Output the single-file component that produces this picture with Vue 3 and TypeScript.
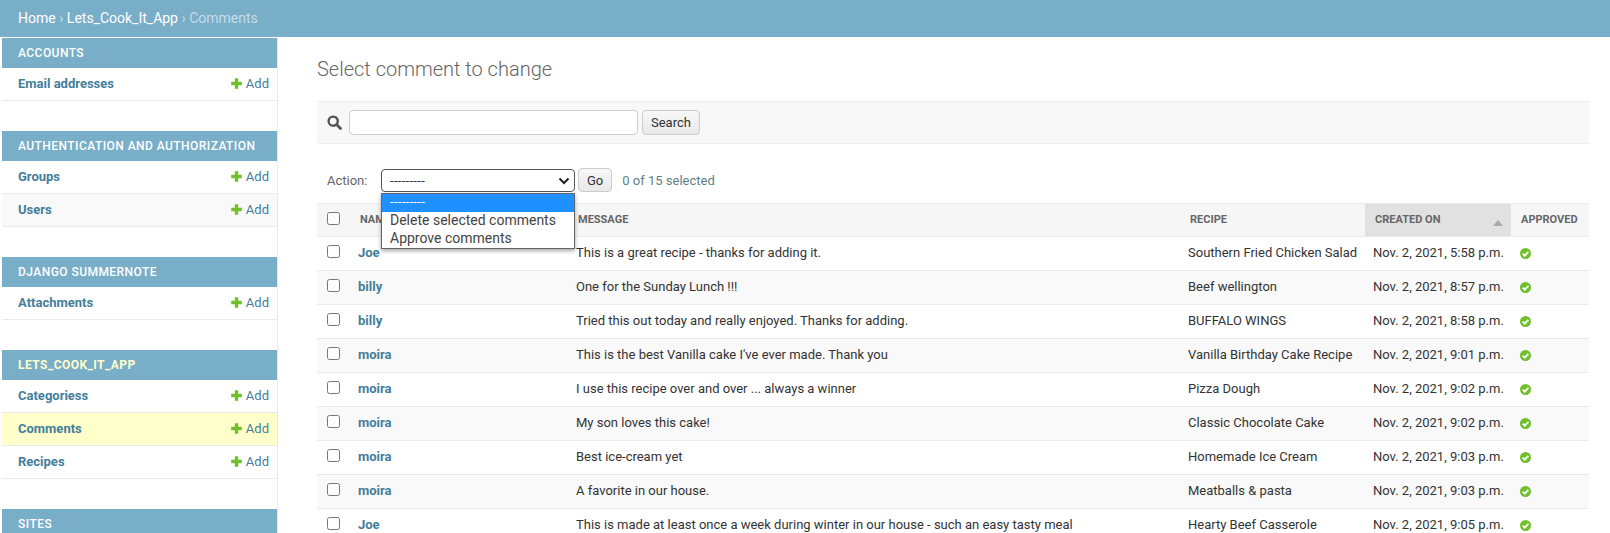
<template>
  <div class="page">
    <div class="breadcrumbs">
      <a>Home</a><span class="sep"> › </span><a>Lets_Cook_It_App</a><span class="sep"> › </span><span class="current">Comments</span>
    </div>
    <div class="body">
      <nav class="sidebar">
        <section v-for="app in apps" :key="app.name" class="app">
          <div class="caption" :class="{ active: app.active }">{{ app.name }}</div>
          <div
            v-for="model in app.models"
            :key="model"
            class="model"
            :class="{ current: model === 'Comments' }"
          >
            <a class="model-name">{{ model }}</a>
            <a class="add">
              <svg width="13" height="13" viewBox="0 0 13 13"><path d="M4.800 1.200h3.400v3.600h3.600v3.400H8.200v3.600H4.800V8.200H1.200V4.800h3.600z" fill="#70bf2b" /></svg>
              Add
            </a>
          </div>
        </section>
      </nav>
      <main class="content">
        <h1>Select comment to change</h1>
        <div class="toolbar">
          <svg class="search-icon" width="15" height="15" viewBox="0 0 15 15">
            <circle cx="6.200" cy="6.200" r="4.600" fill="none" stroke="#555" stroke-width="2.400" />
            <path d="M9.800 9.800l3.700 3.700" stroke="#555" stroke-width="2.800" stroke-linecap="round" />
          </svg>
          <input class="search" type="text" />
          <button class="btn search-btn">Search</button>
        </div>
        <div class="actions">
          <span class="action-label">Action:</span>
          <div class="select-wrap">
            <div class="select">
              <span class="dashes">---------</span>
              <svg width="12" height="8" viewBox="0 0 12 8"><path d="M1.500 1.500L6 6l4.500-4.500" fill="none" stroke="#222" stroke-width="2" /></svg>
            </div>
            <div class="dropdown">
              <div class="option selected"><span class="dashes">---------</span></div>
              <div class="option">Delete selected comments</div>
              <div class="option">Approve comments</div>
            </div>
          </div>
          <button class="btn go">Go</button>
          <span class="counter">0 of 15 selected</span>
        </div>
        <table class="results">
          <colgroup>
            <col class="c-check" /><col class="c-name" /><col class="c-msg" /><col class="c-recipe" /><col class="c-date" /><col />
          </colgroup>
          <thead>
            <tr>
              <th class="check"><input type="checkbox" /></th>
              <th>NAME</th>
              <th>MESSAGE</th>
              <th>RECIPE</th>
              <th class="sorted">CREATED ON<span class="sort-arrow" /></th>
              <th>APPROVED</th>
            </tr>
          </thead>
          <tbody>
            <tr v-for="row in rows" :key="row.message">
              <td class="check"><input type="checkbox" /></td>
              <td><a class="author">{{ row.name }}</a></td>
              <td>{{ row.message }}</td>
              <td>{{ row.recipe }}</td>
              <td>{{ row.date }}</td>
              <td>
                <svg class="yes" width="13" height="13" viewBox="0 0 13 13">
                  <circle cx="6.500" cy="6.500" r="5.500" fill="#70bf2b" />
                  <path d="M3.700 6.700l2 2 3.700-3.800" fill="none" stroke="#fff" stroke-width="1.800" />
                </svg>
              </td>
            </tr>
          </tbody>
        </table>
      </main>
    </div>
  </div>
</template>

<script setup lang="ts">
interface AppGroup {
  name: string
  models: string[]
  active?: boolean
}

const apps: AppGroup[] = [
  { name: 'ACCOUNTS', models: ['Email addresses'] },
  { name: 'AUTHENTICATION AND AUTHORIZATION', models: ['Groups', 'Users'] },
  { name: 'DJANGO SUMMERNOTE', models: ['Attachments'] },
  { name: 'LETS_COOK_IT_APP', models: ['Categoriess', 'Comments', 'Recipes'], active: true },
  { name: 'SITES', models: [] },
]

const rows = [
  { name: 'Joe', message: 'This is a great recipe - thanks for adding it.', recipe: 'Southern Fried Chicken Salad', date: 'Nov. 2, 2021, 5:58 p.m.' },
  { name: 'billy', message: 'One for the Sunday Lunch !!!', recipe: 'Beef wellington', date: 'Nov. 2, 2021, 8:57 p.m.' },
  { name: 'billy', message: 'Tried this out today and really enjoyed. Thanks for adding.', recipe: 'BUFFALO WINGS', date: 'Nov. 2, 2021, 8:58 p.m.' },
  { name: 'moira', message: "This is the best Vanilla cake I've ever made. Thank you", recipe: 'Vanilla Birthday Cake Recipe', date: 'Nov. 2, 2021, 9:01 p.m.' },
  { name: 'moira', message: 'I use this recipe over and over ... always a winner', recipe: 'Pizza Dough', date: 'Nov. 2, 2021, 9:02 p.m.' },
  { name: 'moira', message: 'My son loves this cake!', recipe: 'Classic Chocolate Cake', date: 'Nov. 2, 2021, 9:02 p.m.' },
  { name: 'moira', message: 'Best ice-cream yet', recipe: 'Homemade Ice Cream', date: 'Nov. 2, 2021, 9:03 p.m.' },
  { name: 'moira', message: 'A favorite in our house.', recipe: 'Meatballs & pasta', date: 'Nov. 2, 2021, 9:03 p.m.' },
  { name: 'Joe', message: 'This is made at least once a week during winter in our house - such an easy tasty meal', recipe: 'Hearty Beef Casserole', date: 'Nov. 2, 2021, 9:05 p.m.' },
]
</script>

<style>
html,
body {
  margin: 0;
  height: 533px;
  overflow: hidden;
  background: #fff;
}
</style>

<style scoped>
.page {
  height: 533px;
  overflow: hidden;
  font-family: Roboto, "Liberation Sans", sans-serif;
  font-size: 13px;
  color: #333;
}

.breadcrumbs {
  height: 37px;
  line-height: 36px;
  padding-left: 18px;
  font-size: 14px;
  background: #79aec8;
  color: #c4dce8;
  box-sizing: border-box;
}

.breadcrumbs a {
  color: #fff;
}

.body {
  display: flex;
  align-items: flex-start;
}

.sidebar {
  flex: none;
  width: 276px;
  margin-left: 2px;
  margin-top: 1px;
  border-right: 1px solid #eaeaea;
  box-sizing: border-box;
  height: 500px;
}

.app {
  margin-bottom: 30px;
}

.caption {
  height: 30px;
  line-height: 30px;
  padding-left: 16px;
  background: #79aec8;
  color: #fff;
  font-size: 12px;
  font-weight: 500;
  letter-spacing: 0.45px;
}

.caption.active {
  color: #ffffcc;
  font-weight: 700;
}

.model {
  height: 33px;
  display: flex;
  align-items: center;
  justify-content: space-between;
  padding: 0 8px 2px 16px;
  box-sizing: border-box;
  border-bottom: 1px solid #eaeaea;
}

.model:nth-of-type(odd) {
  background: #f9f9f9;
}

.model.current {
  background: #ffffcc;
}

.model-name {
  font-weight: 700;
  color: #447e9b;
}

.add {
  display: flex;
  align-items: center;
  gap: 3px;
  color: #447e9b;
}

.content {
  flex: 1;
  padding: 0 21px 0 39px;
  min-width: 0;
}

h1 {
  margin: 19px 0 18px;
  height: 27px;
  line-height: 27px;
  font-size: 20px;
  font-weight: 300;
  color: #666;
}

.toolbar {
  height: 43px;
  box-sizing: border-box;
  display: flex;
  align-items: center;
  padding-left: 10px;
  background: #f8f8f8;
  border-top: 1px solid #eee;
  border-bottom: 1px solid #eee;
}

.search-icon {
  margin-right: 7px;
}

.search {
  width: 289px;
  height: 25px;
  box-sizing: border-box;
  border: 1px solid #ccc;
  border-radius: 4px;
  background: #fff;
  padding: 0;
  margin: 0 4px 0 0;
}

.btn {
  height: 25px;
  box-sizing: border-box;
  border: 1px solid #ccc;
  border-radius: 4px;
  background: linear-gradient(#f8f8f8, #e8e8e8);
  font-family: inherit;
  font-size: 13px;
  color: #333;
  padding: 0 8px;
  margin: 0;
}

.actions {
  height: 59px;
  display: flex;
  align-items: center;
  padding: 13px 0 0 10px;
  box-sizing: border-box;
  color: #666;
}

.action-label {
  width: 54px;
}

.select-wrap {
  position: relative;
  margin: 0 3px 1px 0;
  padding-top: 2px;
}

.select {
  width: 194px;
  height: 23px;
  box-sizing: border-box;
  border: 1px solid #555;
  border-radius: 4px;
  background: #fff;
  color: #333;
  font-size: 13px;
  display: flex;
  align-items: center;
  justify-content: space-between;
  padding: 0 4px 0 8px;
}

.dashes {
  letter-spacing: 0.3px;
}

.dropdown {
  position: absolute;
  left: 0;
  top: 26px;
  width: 194px;
  box-sizing: border-box;
  border: 1px solid #666;
  background: #fff;
  box-shadow: 0 2px 4px rgba(0, 0, 0, 0.35);
  font-size: 14px;
  z-index: 2;
}

.option {
  height: 18px;
  line-height: 16px;
  padding-left: 8px;
  color: #444;
}

.option.selected {
  background: #1e90ff;
  color: #fff;
  font-size: 13px;
}

.go {
  height: 24px;
  padding: 0 8px;
  margin-right: 10px;
}

.counter {
  color: #5d7f88;
  font-size: 13px;
}

.results {
  width: 100%;
  table-layout: fixed;
  border-collapse: collapse;
}

.c-check {
  width: 33px;
}

.c-name {
  width: 218px;
}

.c-msg {
  width: 612px;
}

.c-recipe {
  width: 185px;
}

.c-date {
  width: 146px;
}

th {
  height: 33px;
  box-sizing: border-box;
  padding: 0 10px 2px;
  text-align: left;
  background: #f6f6f6;
  border-top: 1px solid #eaeaea;
  border-bottom: 1px solid #eaeaea;
  color: #666;
  font-size: 11px;
  font-weight: 700;
  white-space: nowrap;
}

th.sorted {
  position: relative;
  background: #e1e1e1;
}

.sort-arrow {
  position: absolute;
  right: 8px;
  top: 16px;
  border-left: 5px solid transparent;
  border-right: 5px solid transparent;
  border-bottom: 6px solid #aaa;
}

td {
  height: 34px;
  box-sizing: border-box;
  padding: 0 8px 2px;
  border-bottom: 1px solid #eaeaea;
  white-space: nowrap;
}

tbody tr:nth-child(even) td {
  background: #f9f9f9;
}

th.check,
td.check {
  padding: 8px 0 0 10px;
  vertical-align: top;
}

.check input {
  width: 13px;
  height: 13px;
  margin: 0;
  display: block;
}

.author {
  font-weight: 700;
  color: #447e9b;
}

.yes {
  display: block;
  margin-top: 2px;
}
</style>
